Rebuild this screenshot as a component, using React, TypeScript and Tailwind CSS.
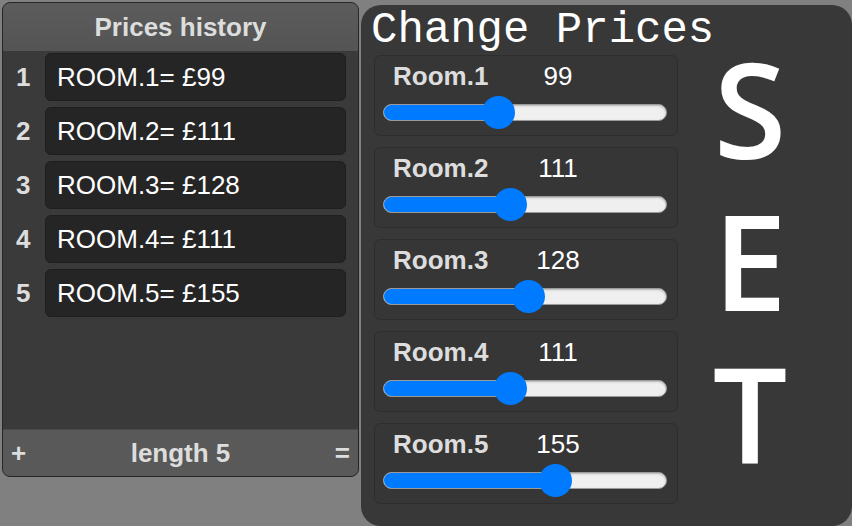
import React from 'react';

const history = [
  { n: 1, room: 'ROOM.1', price: 99 },
  { n: 2, room: 'ROOM.2', price: 111 },
  { n: 3, room: 'ROOM.3', price: 128 },
  { n: 4, room: 'ROOM.4', price: 111 },
  { n: 5, room: 'ROOM.5', price: 155 },
];

const MAX = 250;

function Slider({ value }: { value: number }) {
  // thumb is 33px wide, travels the track minus its own width
  const left = (value / MAX) * (284 - 33);
  return (
    <div className="relative h-[33px] w-[284px]">
      <div className="absolute left-0 right-0 top-[8px] h-[17px] overflow-hidden rounded-full border border-[#9a9a9a] bg-[#efefef] shadow-[inset_0_1px_2px_rgba(0,0,0,0.25)]">
        <div className="h-full bg-[#007bff]" style={{ width: left + 16 }} />
      </div>
      <div
        className="absolute top-0 h-[33px] w-[33px] rounded-full bg-[#007bff]"
        style={{ left }}
      />
    </div>
  );
}

function RoomCard({ name, value }: { name: string; value: number }) {
  return (
    <div className="h-[81px] w-[304px] rounded-md border border-[#2e2e2e] bg-[#363636] px-[8px]">
      <div className="flex h-[35px] items-end pl-[10px] text-[26px] leading-[30px]">
        <span className="w-[125px] font-bold text-[#dddddd]">{name}</span>
        <span className="w-[80px] text-center text-white">{value}</span>
      </div>
      <div className="mt-[5px]">
        <Slider value={value} />
      </div>
    </div>
  );
}

export default function App() {
  return (
    <div
      className="flex h-[526px] w-[852px] overflow-hidden bg-[#808080]"
      style={{ fontFamily: '"Liberation Sans", Arial, sans-serif' }}
    >
      {/* Prices history */}
      <div className="ml-[2px] mt-[2px] flex h-[475px] w-[357px] flex-col overflow-hidden rounded-lg border border-[#262626] bg-[#3a3a3a]">
        <div className="flex h-[48px] items-center justify-center bg-gradient-to-b from-[#5c5c5c] to-[#545454] text-[26px] font-bold text-[#dddddd]">
          Prices history
        </div>
        <div className="flex flex-1 flex-col gap-[6px] pt-[2px]">
          {history.map((h) => (
            <div key={h.n} className="flex h-[48px] items-center">
              <span className="w-[42px] pl-[13px] text-[26px] font-bold text-[#dddddd]">{h.n}</span>
              <div className="flex h-[48px] w-[301px] items-center rounded-md border border-[#1e1e1e] bg-[#252525] pl-[11px] text-[26px] text-white">
                {h.room}= £{h.price}
              </div>
            </div>
          ))}
        </div>
        <div className="grid h-[47px] grid-cols-[1fr_auto_1fr] items-center border-t border-[#4a4a4a] bg-[#595959] px-[8px] text-[26px] font-bold text-[#dddddd]">
          <span className="justify-self-start">+</span>
          <span>length 5</span>
          <span className="justify-self-end">=</span>
        </div>
      </div>

      {/* Change Prices */}
      <div className="ml-[2px] mt-[5px] flex h-[521px] flex-1 rounded-[20px] bg-[#383838]">
        <div className="w-[317px] pl-[13px]">
          <div
            className="-ml-[3px] h-[50px] whitespace-nowrap text-[44px] leading-[50px] text-white"
            style={{ fontFamily: '"Liberation Mono", "Courier New", monospace' }}
          >
            Change Prices
          </div>
          <div className="flex flex-col gap-[11px]">
            {history.map((h) => (
              <RoomCard key={h.n} name={`Room.${h.n}`} value={h.price} />
            ))}
          </div>
        </div>
        <div
          className="flex w-[144px] flex-col items-center gap-[20px] pt-[37px] text-[132px] font-semibold leading-none text-white"
          style={{ fontFamily: '"Open Sans", sans-serif' }}
        >
          <span>S</span>
          <span>E</span>
          <span>T</span>
        </div>
      </div>
    </div>
  );
}
